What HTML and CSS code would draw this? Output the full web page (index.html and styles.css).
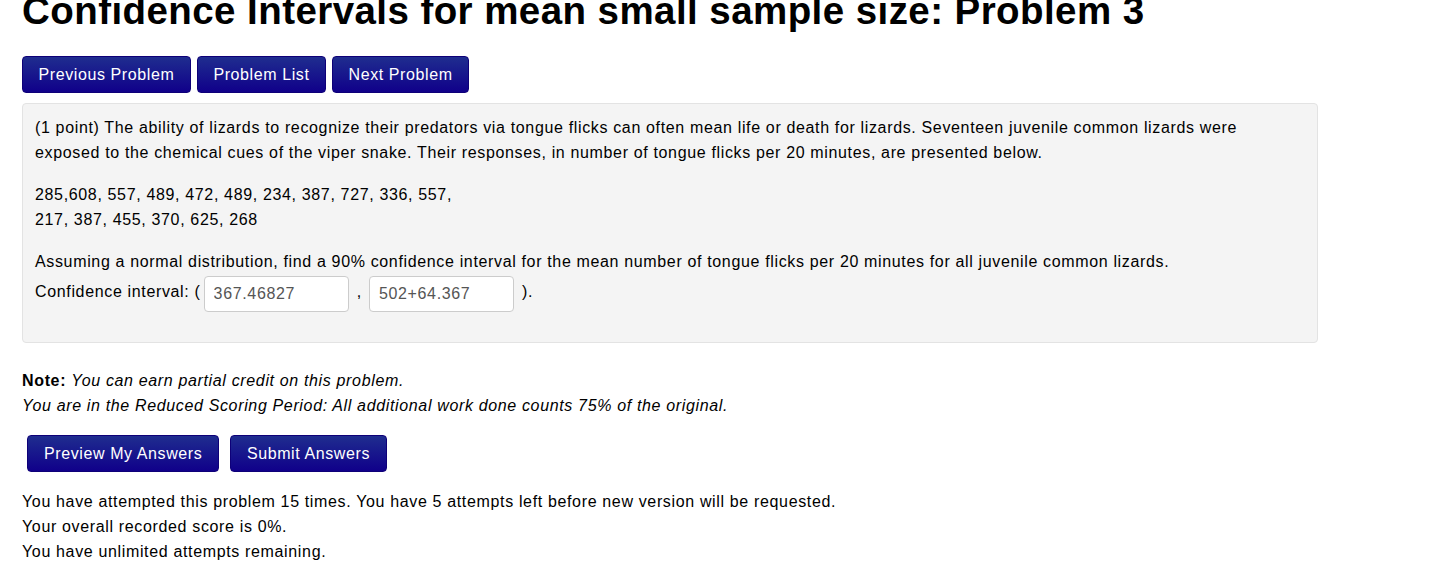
FILE: index.html
```html
<!DOCTYPE html>
<html>
<head>
<meta charset="utf-8">
<link rel="stylesheet" href="styles.css">
</head>
<body>
<div class="page">
  <h1 class="title">Confidence Intervals for mean small sample size: Problem 3</h1>
  <div class="nav">
    <button class="btn">Previous Problem</button>
    <button class="btn">Problem List</button>
    <button class="btn">Next Problem</button>
  </div>
  <div class="problem">
    <p>(1 point) The ability of lizards to recognize their predators via tongue flicks can often mean life or death for lizards. Seventeen juvenile common lizards were exposed to the chemical cues of the viper snake. Their responses, in number of tongue flicks per 20 minutes, are presented below.</p>
    <p>285,608, 557, 489, 472, 489, 234, 387, 727, 336, 557,<br>217, 387, 455, 370, 625, 268</p>
    <p class="last">Assuming a normal distribution, find a 90% confidence interval for the mean number of tongue flicks per 20 minutes for all juvenile common lizards.<br>
    Confidence interval: ( <input class="field" type="text" value="367.46827"> , <input class="field second" type="text" value="502+64.367"> ).</p>
  </div>
  <div class="note">
    <div><b>Note:</b> <i>You can earn partial credit on this problem.</i></div>
    <div><i>You are in the Reduced Scoring Period: All additional work done counts 75% of the original.</i></div>
  </div>
  <div class="submit">
    <button class="btn wide">Preview My Answers</button>
    <button class="btn">Submit Answers</button>
  </div>
  <div class="status">
    <div>You have attempted this problem 15 times. You have 5 attempts left before new version will be requested.</div>
    <div>Your overall recorded score is 0%.</div>
    <div>You have unlimited attempts remaining.</div>
  </div>
</div>
</body>
</html>
```

FILE: styles.css
```css
html, body {
  margin: 0;
  padding: 0;
  background: #fff;
}
body {
  font-family: "Liberation Sans", Arial, sans-serif;
  font-size: 16px;
  letter-spacing: 0.65px;
  color: #000;
  overflow: hidden;
}
.page {
  padding-left: 22px;
  width: 1296px;
}
.title {
  font-size: 38.5px;
  font-weight: bold;
  letter-spacing: 0.43px;
  line-height: 40px;
  margin: -9px 0 25px 0;
  white-space: nowrap;
}
.nav {
  display: flex;
  gap: 6px;
  margin-bottom: 10px;
}
.btn {
  font-family: "Liberation Sans", Arial, sans-serif;
  font-size: 16px;
  letter-spacing: 0.6px;
  color: #fff;
  background: linear-gradient(to bottom, #1f2d8f, #10008a);
  border: 1px solid #0e0078;
  border-radius: 4px;
  height: 37px;
  padding: 0 15.5px;
  line-height: 35px;
  cursor: pointer;
}
.btn.wide {
  padding: 0 16px;
}
.problem {
  box-sizing: border-box;
  background: #f4f4f4;
  border: 1px solid #e3e3e3;
  border-radius: 4px;
  padding: 11px 12px 0 12px;
  height: 240px;
}
.problem p {
  margin: 0 0 17px 0;
  line-height: 25px;
}
.problem p.last {
  margin: 0;
}
.field {
  font-family: "Liberation Sans", Arial, sans-serif;
  font-size: 16px;
  letter-spacing: 0.65px;
  color: #555;
  width: 145px;
  height: 36px;
  box-sizing: border-box;
  border: 1px solid #ccc;
  border-radius: 4px;
  padding: 4px 9px;
  margin: 2px 3px 0 -2px;
  vertical-align: middle;
  background: #fff;
}
.field.second {
  margin-left: 2px;
}
.note {
  margin-top: 25px;
  line-height: 25px;
}
.submit {
  display: flex;
  gap: 11px;
  padding-left: 5px;
  margin-top: 17px;
}
.status {
  margin-top: 17px;
  line-height: 25px;
}
```
